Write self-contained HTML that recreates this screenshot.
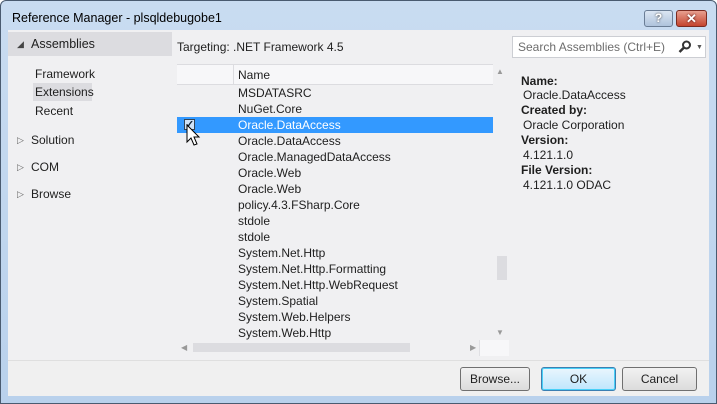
<!DOCTYPE html>
<html><head><style>
*{margin:0;padding:0;box-sizing:border-box}
body{width:717px;height:404px;overflow:hidden;background:#fff;font-family:"Liberation Sans",sans-serif;font-size:12px;color:#1e1e1e;position:relative}
.a{position:absolute}
.t{position:absolute;white-space:nowrap;line-height:16px}
</style></head><body>
<div class="a" style="left:0;top:0;width:717px;height:404px;background:linear-gradient(#c9dcf1,#b9d1ec);border:1px solid #4a5b70;border-radius:6px 6px 0 0"></div>
<div class="t" style="left:12px;top:10px;font-size:12.5px;color:#000">Reference Manager - plsqldebugobe1</div>
<div class="a" style="left:644px;top:10px;width:29px;height:17px;border:1px solid #6a7d95;border-radius:3px;background:linear-gradient(#dbe6f3,#aec3dc);color:#fff;text-align:center;font-weight:bold;font-size:12px;line-height:15px;text-shadow:0 0 2px #333">?</div>
<div class="a" style="left:676px;top:10px;width:31px;height:17px;border:1px solid #7a2a20;border-radius:3px;background:linear-gradient(#e8a090,#c4442e);color:#fff;text-align:center;font-weight:bold;font-size:13px;line-height:15px;text-shadow:0 0 2px #400">✕</div>
<div class="a" style="left:8px;top:30px;width:701px;height:366px;background:#f0f0f2"></div>
<div class="a" style="left:8px;top:32px;width:164px;height:24px;background:#dcdce0"></div>
<div class="t" style="left:17px;top:36px;font-size:9px;color:#444">◢</div>
<div class="t" style="left:31px;top:36px;font-size:12.5px">Assemblies</div>
<div class="a" style="left:33px;top:83px;width:59px;height:18px;background:#dcdce0"></div>
<div class="t" style="left:35px;top:66px">Framework</div>
<div class="t" style="left:35px;top:84px">Extensions</div>
<div class="t" style="left:35px;top:103px">Recent</div>
<div class="t" style="left:17px;top:132px;font-size:9px;color:#666">▷</div><div class="t" style="left:31px;top:132px">Solution</div>
<div class="t" style="left:17px;top:159px;font-size:9px;color:#666">▷</div><div class="t" style="left:31px;top:159px">COM</div>
<div class="t" style="left:17px;top:186px;font-size:9px;color:#666">▷</div><div class="t" style="left:31px;top:186px">Browse</div>
<div class="t" style="left:177px;top:39px">Targeting: .NET Framework 4.5</div>
<div class="a" style="left:512px;top:36px;width:194px;height:22px;background:#fff;border:1px solid #ccced3"></div>
<div class="t" style="left:518px;top:39px;color:#6d6d6d">Search Assemblies (Ctrl+E)</div>
<svg class="a" style="left:678px;top:40px" width="14" height="14"><circle cx="8.5" cy="5" r="3.5" fill="none" stroke="#333" stroke-width="2"/><path d="M6 7.5 L1.5 12" stroke="#333" stroke-width="2.5"/></svg>
<div class="t" style="left:696px;top:40px;font-size:7px;color:#555">▼</div>
<div class="a" style="left:177px;top:64px;width:316px;height:21px;background:#f7f7f9;border-top:1px solid #dcdce0;border-bottom:1px solid #dcdce0"></div>
<div class="a" style="left:233px;top:65px;width:1px;height:19px;background:#dcdce0"></div>
<div class="t" style="left:238px;top:67px">Name</div>
<div class="a" style="left:177px;top:117px;width:316px;height:16px;background:#3399ff"></div>
<div class="a" style="left:184px;top:119px;width:11px;height:11px;background:#cfe3f8;border:1px solid #345"></div>
<div class="t" style="left:185px;top:117px;font-size:11px;font-weight:bold;color:#123">✓</div>
<svg class="a" style="left:186px;top:124px" width="16" height="24"><path d="M1 1 L1 18 L5 14 L8 21 L11 20 L8 13 L13 13 Z" fill="#fff" stroke="#000" stroke-width="1"/></svg>
<div class="t" style="left:238px;top:85px">MSDATASRC</div>
<div class="t" style="left:238px;top:101px">NuGet.Core</div>
<div class="t" style="left:238px;top:117px;color:#fff">Oracle.DataAccess</div>
<div class="t" style="left:238px;top:133px">Oracle.DataAccess</div>
<div class="t" style="left:238px;top:149px">Oracle.ManagedDataAccess</div>
<div class="t" style="left:238px;top:165px">Oracle.Web</div>
<div class="t" style="left:238px;top:181px">Oracle.Web</div>
<div class="t" style="left:238px;top:197px">policy.4.3.FSharp.Core</div>
<div class="t" style="left:238px;top:213px">stdole</div>
<div class="t" style="left:238px;top:229px">stdole</div>
<div class="t" style="left:238px;top:245px">System.Net.Http</div>
<div class="t" style="left:238px;top:261px">System.Net.Http.Formatting</div>
<div class="t" style="left:238px;top:277px">System.Net.Http.WebRequest</div>
<div class="t" style="left:238px;top:293px">System.Spatial</div>
<div class="t" style="left:238px;top:309px">System.Web.Helpers</div>
<div class="t" style="left:238px;top:325px">System.Web.Http</div>
<div class="t" style="left:496px;top:64px;font-size:8px;color:#999">▲</div>
<div class="a" style="left:497px;top:256px;width:10px;height:24px;background:#dcdce0"></div>
<div class="t" style="left:496px;top:325px;font-size:8px;color:#999">▼</div>
<div class="t" style="left:181px;top:340px;font-size:8px;color:#999">◀</div>
<div class="a" style="left:193px;top:343px;width:217px;height:9px;background:#dcdce0"></div>
<div class="t" style="left:470px;top:340px;font-size:8px;color:#999">▶</div>
<div class="a" style="left:479px;top:340px;width:30px;height:16px;background:#f7f7f9;border-left:1px solid #e0e0e4"></div>
<div class="t" style="left:521px;top:73px;font-weight:bold">Name:</div>
<div class="t" style="left:523px;top:87px">Oracle.DataAccess</div>
<div class="t" style="left:521px;top:102px;font-weight:bold">Created by:</div>
<div class="t" style="left:523px;top:117px">Oracle Corporation</div>
<div class="t" style="left:521px;top:132px;font-weight:bold">Version:</div>
<div class="t" style="left:523px;top:147px">4.121.1.0</div>
<div class="t" style="left:521px;top:162px;font-weight:bold">File Version:</div>
<div class="t" style="left:523px;top:177px">4.121.1.0 ODAC</div>
<div class="a" style="left:8px;top:360px;width:701px;height:36px;background:#f0f0f0;border-top:1px solid #dfdfdf"></div>
<div class="a" style="left:460px;top:367px;width:70px;height:24px;border:1px solid #707070;border-radius:3px;background:linear-gradient(#f2f2f2,#dcdcdc);text-align:center;line-height:22px">Browse...</div>
<div class="a" style="left:541px;top:367px;width:75px;height:24px;border:1px solid #3c7fb1;border-radius:3px;background:linear-gradient(#eaf6fd,#bee6fd);box-shadow:inset 0 0 0 1px #48d0f8;text-align:center;line-height:22px">OK</div>
<div class="a" style="left:622px;top:367px;width:75px;height:24px;border:1px solid #707070;border-radius:3px;background:linear-gradient(#f2f2f2,#dcdcdc);text-align:center;line-height:22px">Cancel</div>
</body></html>
